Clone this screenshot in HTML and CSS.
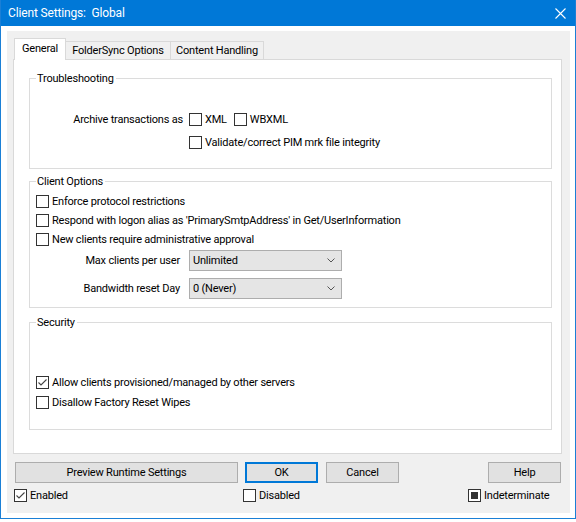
FILE: index.html
```html
<!DOCTYPE html>
<html>
<head>
<meta charset="UTF-8">
<title>Client Settings: Global</title>
<link rel="stylesheet" href="styles.css">
</head>
<body>

<div class="window">
  <div class="titlebar">
    <span class="title">Client Settings:&nbsp; Global</span>
    <svg class="close" width="11" height="11" viewBox="0 0 11 11"><path d="M0.5 0.5L10.5 10.5M10.5 0.5L0.5 10.5" stroke="#fff" stroke-width="1.1" fill="none"/></svg>
  </div>

  <div class="frame">
    <div class="client">

      <div class="tabs">
        <div class="tab tab-general active">General</div>
        <div class="tab tab-sync">FolderSync Options</div>
        <div class="tab tab-content">Content Handling</div>
      </div>

      <div class="panel">
        <fieldset class="group trouble">
          <legend>Troubleshooting</legend>
          <div class="line">
            <span class="label">Archive transactions as</span>
            <label class="check xml"><span class="box"></span>XML</label>
            <label class="check"><span class="box"></span>WBXML</label>
          </div>
          <div class="line">
            <span class="label"></span>
            <label class="check"><span class="box"></span>Validate/correct PIM mrk file integrity</label>
          </div>
        </fieldset>

        <fieldset class="group client-opts">
          <legend>Client Options</legend>
          <label class="check row"><span class="box"></span>Enforce protocol restrictions</label>
          <label class="check row"><span class="box"></span>Respond with logon alias as 'PrimarySmtpAddress' in Get/UserInformation</label>
          <label class="check row"><span class="box"></span>New clients require administrative approval</label>
          <div class="pick first">
            <span class="pick-label">Max clients per user</span>
            <div class="combo"><span>Unlimited</span><svg width="8" height="5" viewBox="0 0 8 5"><path d="M0.5 0.5L4 4L7.5 0.5" stroke="#555" fill="none"/></svg></div>
          </div>
          <div class="pick">
            <span class="pick-label">Bandwidth reset Day</span>
            <div class="combo"><span>0 (Never)</span><svg width="8" height="5" viewBox="0 0 8 5"><path d="M0.5 0.5L4 4L7.5 0.5" stroke="#555" fill="none"/></svg></div>
          </div>
        </fieldset>

        <fieldset class="group security">
          <legend>Security</legend>
          <label class="check srow"><span class="box on"><svg width="11" height="11" viewBox="0 0 11 11"><path d="M1.5 5.5L4 8L9.5 2.5" stroke="#444" stroke-width="1.1" fill="none"/></svg></span>Allow clients provisioned/managed by other servers</label>
          <label class="check srow"><span class="box"></span>Disallow Factory Reset Wipes</label>
        </fieldset>
      </div>

      <div class="buttons">
        <div class="btn preview">Preview Runtime Settings</div>
        <div class="btn ok">OK</div>
        <div class="btn cancel">Cancel</div>
        <div class="btn help">Help</div>
      </div>

      <div class="states">
        <label class="check"><span class="box on"><svg width="11" height="11" viewBox="0 0 11 11"><path d="M1.5 5.5L4 8L9.5 2.5" stroke="#444" stroke-width="1.1" fill="none"/></svg></span>Enabled</label>
        <label class="check"><span class="box"></span>Disabled</label>
        <label class="check"><span class="box mixed"><span class="dot"></span></span>Indeterminate</label>
      </div>

    </div>
  </div>
</div>

</body>
</html>
```

FILE: styles.css
```css
body{margin:0;background:#fff;font-family:Roboto,"Liberation Sans",Arial,sans-serif;font-size:11px;letter-spacing:-0.2px;color:#000}

.window{width:576px;height:519px;box-sizing:border-box;border:1px solid #1a7fd6;border-top:0}
.titlebar{height:26px;background:#0078d7;color:#fff;display:flex;align-items:center;justify-content:space-between;padding:0 9px 0 7px}
.title{font-size:12px;letter-spacing:-0.15px}
.frame{background:#fff;padding:5px 5px 5px 6px}
.client{background:#f0f0f0;height:482px;overflow:hidden}

/* tabs */
.tabs{display:flex;align-items:flex-end;margin:7px 0 0 7px}
.tab{box-sizing:border-box;height:18px;border:1px solid #d9d9d9;border-bottom:0;background:#f0f0f0;text-align:center;line-height:17px;margin-left:-1px}
.tab.active{height:22px;line-height:20px;background:#fff;margin-left:0;margin-bottom:-1px;position:relative;z-index:1}
.tab-general{width:52px}
.tab-sync{width:106px}
.tab-content{width:94px}

.panel{margin:0 8px 0 6px;border:1px solid #d9d9d9;background:#fff;padding:12px 9px 23px 15px}

/* group boxes */
.group{margin:0;border:1px solid #dcdcdc;padding:0 6px;min-width:0}
.group legend{padding:0 2px 0 1px;line-height:13px}
.trouble{padding-top:23px;padding-bottom:14px}
.client-opts{margin-top:6px;padding-top:4px;padding-bottom:8px}
.security{margin-top:8px;padding-top:43px;padding-bottom:17px}

.line{display:flex;align-items:center;height:23px}
.label{width:147px;margin-right:6px;text-align:right;flex-shrink:0}
.xml{margin-right:7px}

.check{display:flex;align-items:center}
.box{width:13px;height:13px;box-sizing:border-box;border:1px solid #333;background:#fff;margin-right:3px;flex-shrink:0;display:flex;align-items:center;justify-content:center}
.box svg{display:block}
.mixed .dot{width:7px;height:7px;background:#333}
.row{height:19px}
.srow{height:20px}

.pick{display:flex;align-items:center;height:21px;margin-top:7px}
.pick.first{margin-top:1px}
.pick-label{width:144px;margin-right:9px;text-align:right}
.combo{box-sizing:border-box;width:153px;height:21px;border:1px solid #adadad;background:#e5e5e5;display:flex;align-items:center;justify-content:space-between;padding:0 6px 0 3px}

/* bottom */
.buttons{display:flex;margin-top:8px;padding:0 9px 0 8px}
.btn{box-sizing:border-box;height:21px;border:1px solid #adadad;background:#e1e1e1;display:flex;align-items:center;justify-content:center;width:73px}
.preview{width:223px;margin-right:7px}
.ok{border:2px solid #0078d7;margin-right:8px}
.help{margin-left:auto}

.states{display:grid;grid-template-columns:229px 225px auto;margin-top:2px;padding-left:7px;height:20px;align-items:center}
```
